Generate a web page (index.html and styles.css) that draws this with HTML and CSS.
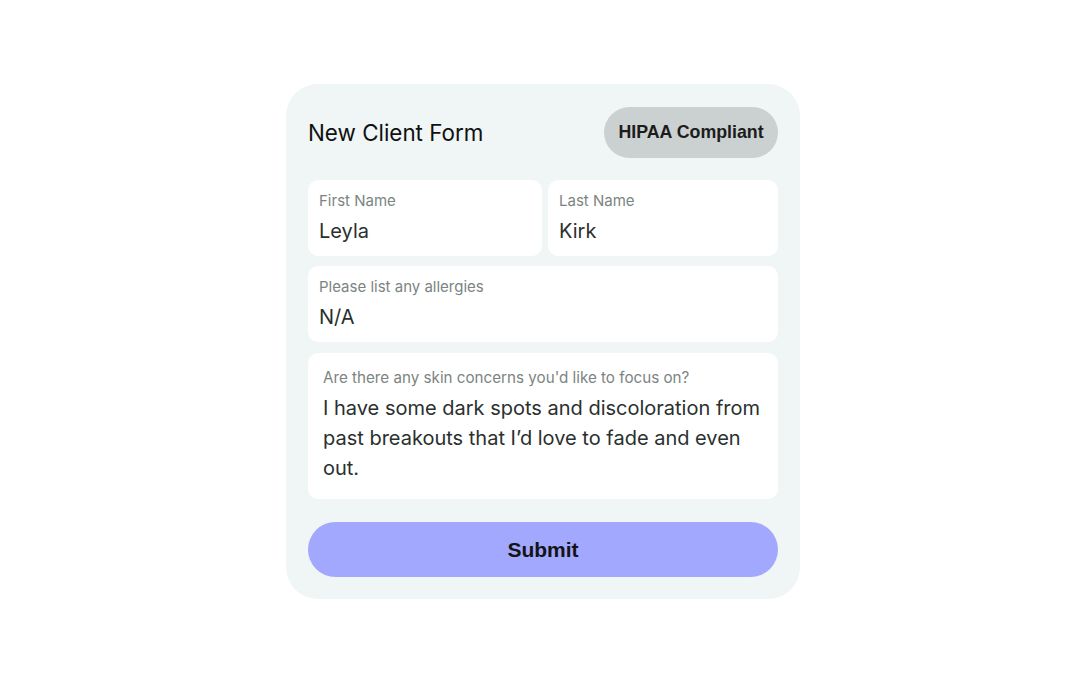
FILE: index.html
```html
<!DOCTYPE html>
<html>
<head>
<meta charset="utf-8">
<link rel="stylesheet" href="styles.css">
</head>
<body>
<div class="page">
  <form class="card">
    <div class="header">
      <h1 class="title">New Client Form</h1>
      <span class="badge">HIPAA Compliant</span>
    </div>
    <div class="row">
      <div class="field field-first">
        <div class="label">First Name</div>
        <div class="value">Leyla</div>
      </div>
      <div class="field field-last">
        <div class="label">Last Name</div>
        <div class="value">Kirk</div>
      </div>
    </div>
    <div class="field">
      <div class="label">Please list any allergies</div>
      <div class="value">N/A</div>
    </div>
    <div class="field field-large">
      <div class="label">Are there any skin concerns you'd like to focus on?</div>
      <div class="value value-multi">I have some dark spots and discoloration from past breakouts that I’d love to fade and even out.</div>
    </div>
    <button type="button" class="submit">Submit</button>
  </form>
</div>
</body>
</html>
```

FILE: styles.css
```css
* { box-sizing: border-box; }
html, body { margin: 0; padding: 0; background: #ffffff; }
body { font-family: "Inter", "Liberation Sans", sans-serif; }
.page {
  width: 1088px;
  height: 687px;
  display: flex;
  justify-content: center;
  padding-top: 84px;
  padding-right: 2px;
}
.card {
  width: 514px;
  height: 515px;
  background: #f0f5f5;
  border-radius: 32px;
  padding: 23px 22px 22px;
  display: flex;
  flex-direction: column;
}
.header {
  display: flex;
  justify-content: space-between;
  align-items: center;
  height: 51px;
  margin-bottom: 22px;
}
.title {
  margin: 0;
  font-family: "Inter", "Liberation Sans", sans-serif;
  font-weight: 400;
  font-size: 22.4px;
  color: #111;
}
.badge {
  height: 51px;
  width: 174px;
  border-radius: 26px;
  background: #cbd0d0;
  display: flex;
  align-items: center;
  justify-content: center;
  font-family: "Liberation Sans", sans-serif;
  font-weight: 700;
  font-size: 17.8px;
  color: #1c1c1c;
}
.row {
  display: flex;
  gap: 6px;
}
.field-first { flex: 0 0 234px; }
.field-last { flex: 1; }
.field {
  background: #ffffff;
  border-radius: 10px;
  height: 76px;
  padding: 12px 11px 0;
  margin-bottom: 10px;
}
.label {
  font-size: 15px;
  color: #7b8481;
  line-height: 18px;
}
.value {
  margin-top: 9px;
  font-size: 20px;
  line-height: 24px;
  color: #2a302e;
}
.field-large {
  height: 147px;
  padding: 16px 15px 0;
  margin-top: 1px;
  margin-bottom: 23px;
}
.field-large .label { font-size: 15.2px; }
.value-multi {
  margin-top: 6px;
  line-height: 30px;
}
.submit {
  height: 55px;
  border: none;
  border-radius: 28px;
  background: #a1a8fe;
  font-family: "Liberation Sans", sans-serif;
  font-weight: 700;
  font-size: 21px;
  color: #141414;
  width: 100%;
  padding: 0;
}
```
